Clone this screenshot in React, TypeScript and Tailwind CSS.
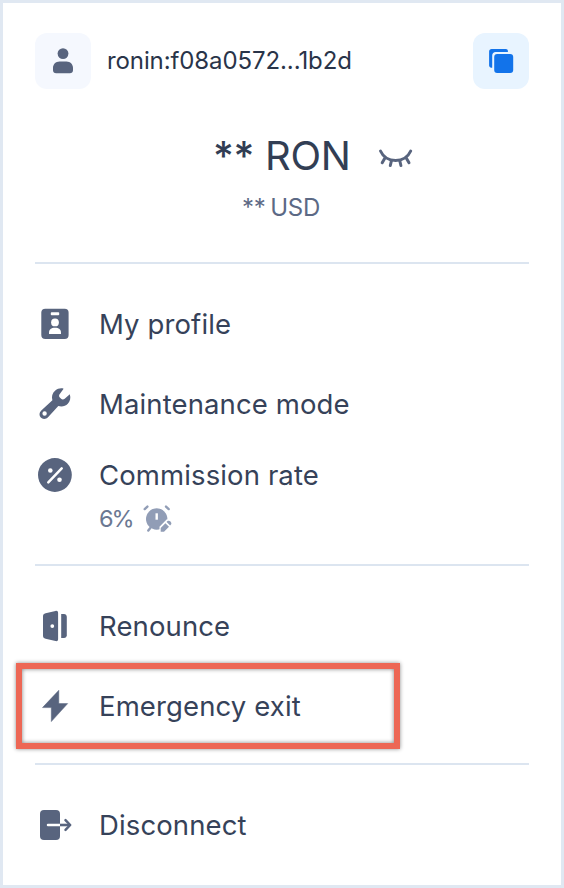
import type { ReactNode } from "react";

const INK = "#58647e";

function UserIcon() {
  return (
    <svg width="24" height="28" viewBox="0 0 24 28" fill={INK}>
      <circle cx="12" cy="6.600" r="5.400" />
      <path d="M8.500 14.400h7c3.700 0 6.500 2.800 6.500 6.400v2.400c0 1.800-1.300 3.100-3.100 3.100H5.100C3.300 26.300 2 25 2 23.200v-2.400c0-3.600 2.800-6.400 6.500-6.400z" />
    </svg>
  );
}

function CopyIcon() {
  return (
    <svg width="26" height="26" viewBox="0 0 26 26" fill="#1273ea">
      <path d="M3.600 1h14.300c1.200 0 2 .8 2 2v1H7.600C5.600 4 4.200 5.400 4.200 7.400v12.300H3.300c-1.200 0-2.200-.9-2.200-2.100V3.600C1.100 2.100 2.100 1 3.600 1z" />
      <rect x="6.200" y="6" width="19" height="19" rx="3" />
    </svg>
  );
}

function ClosedEyeIcon() {
  return (
    <svg className="mt-1.5" width="36" height="24" viewBox="0 0 36 24" fill="none" stroke={INK} strokeWidth="3" strokeLinecap="round">
      <path d="M2.500 4C5.200 10 10.800 13.400 17.600 13.400S30 10 32.700 4" />
      <path d="M6.800 11.200L4.200 15.800M13.500 13.500l-1.200 5M21.700 13.500l1.200 5M28.400 11.200l2.600 4.600" />
    </svg>
  );
}

function BadgeIcon() {
  return (
    <svg width="40" height="40" viewBox="0 0 40 40">
      <rect x="6.300" y="4.800" width="27.300" height="30.300" rx="4" fill={INK} />
      <g fill="white">
        <rect x="15.800" y="8.300" width="8.400" height="2.900" rx=".8" />
        <circle cx="20" cy="18.400" r="3.900" />
        <path d="M14 30v-1.300c0-3 2.200-4.900 6-4.900s6 1.900 6 4.900V30z" />
      </g>
    </svg>
  );
}

function WrenchIcon() {
  return (
    <svg width="40" height="40" viewBox="0 0 40 40">
      <path
        fill={INK}
        fillRule="evenodd"
        d="M28.600 4.700c-2.600-.8-6-.2-8.300 1.800-3 2.600-4 6-2.900 9.700L6.300 26.600c-2.300 2.100-2.300 5.200-.5 7 1.900 1.900 5.300 1.700 7.200-.4l10.300-11.100c3.900.9 7.100.1 9.500-2.300 2.300-2.400 3.200-6 2-9.600l-5.100 4.600c-1.200 1-2.600 1-3.600 0l-1.300-1.300c-1-1-1-2.400 0-3.500zM9.600 27.300a2.200 2.200 0 1 1 0 4.400 2.200 2.200 0 0 1 0-4.400z"
      />
    </svg>
  );
}

function PercentIcon() {
  return (
    <svg width="40" height="40" viewBox="0 0 40 40">
      <circle cx="19.900" cy="20" r="16.900" fill={INK} />
      <path d="M13.300 27.300L26.700 13.400" stroke="white" strokeWidth="2.500" strokeLinecap="round" />
      <circle cx="15.300" cy="15.500" r="2.300" fill="white" />
      <circle cx="24.500" cy="24.700" r="2.300" fill="white" />
    </svg>
  );
}

function AlarmEditIcon() {
  return (
    <svg width="30" height="30" viewBox="0 0 30 30" fill="none">
      <g stroke="#919db6" strokeWidth="2.400" strokeLinecap="round">
        <path d="M2.700 5.100l2.700-2.500M24 2.600l2.700 2.500M8.300 24l-2 2.500" />
      </g>
      <circle cx="14.700" cy="15" r="10.700" fill="#919db6" />
      <path d="M14.700 9.300v6.400" stroke="white" strokeWidth="2.400" />
      <path d="M17.500 28v-5.300l7.600-7.600 4.400 4.400-8 8.500z" fill="white" />
      <path d="M18.700 27.800v-3.900l4.700-4.700 3.600 3.600-5 5zM24.600 18l.9-.9c1.800-1.600 5 1.500 3.500 3.500l-.9.900z" fill="#919db6" />
    </svg>
  );
}

function DoorIcon() {
  return (
    <svg width="40" height="40" viewBox="0 0 40 40" fill={INK}>
      <path fillRule="evenodd" d="M10.600 7.200l9.900-2.300c1.600-.4 2.600.5 2.600 2v26.300c0 1.500-1 2.300-2.600 1.900l-9.900-2.300C8.800 32.400 8 31.300 8 29.800V10.200c0-1.500.8-2.600 2.600-3zM17.300 18.200a1.900 1.900 0 1 0 0 3.800 1.900 1.900 0 0 0 0-3.800z" />
      <path d="M26.200 8h2.800c1.600 0 2.800 1.200 2.800 2.800v18.400c0 1.600-1.200 2.800-2.800 2.800h-2.800z" />
    </svg>
  );
}

function BoltIcon() {
  return (
    <svg width="40" height="40" viewBox="0 0 40 40">
      <path d="M23.800 4.300L7.500 21.600h8.800v14L32.700 17.600h-8.900z" fill={INK} stroke={INK} strokeWidth=".5" strokeLinejoin="round" />
    </svg>
  );
}

function ExitIcon() {
  return (
    <svg width="40" height="40" viewBox="0 0 40 40" fill="none" strokeLinecap="round" strokeLinejoin="round">
      <rect x="5" y="5" width="20" height="30" rx="4" fill={INK} />
      <path d="M13 20h12" stroke="white" strokeWidth="2.500" />
      <path d="M25 18.700h9v2.600h-9z" fill={INK} />
      <path d="M30.500 15.200l4.700 4.800-4.700 4.800" stroke={INK} strokeWidth="2.500" />
    </svg>
  );
}

function MenuRow({ icon, label }: { icon: ReactNode; label: string }) {
  return (
    <div className="flex h-20 items-center gap-6">
      {icon}
      <span className="text-[27.500px] leading-9 tracking-[0.12px] whitespace-nowrap text-[#364259]">{label}</span>
    </div>
  );
}

function Divider() {
  return <div className="h-[2px] bg-[#dce5f0]" />;
}

export default function App() {
  return (
    <main className="h-[888px] w-[564px] overflow-hidden border-[3px] border-[#e0e8f2] bg-white px-8 pt-[30px] font-['Inter',sans-serif] text-[#364259]">
      <header className="flex h-14 items-center">
        <div className="flex size-14 items-center justify-center rounded-xl bg-[#f5f8fe]">
          <UserIcon />
        </div>
        <span className="ml-4 text-[24px] leading-8 tracking-[-0.1px] text-[#293449]">ronin:f08a0572...1b2d</span>
        <button className="ml-auto flex size-14 items-center justify-center rounded-xl bg-[#e8f4ff]" aria-label="Copy address">
          <CopyIcon />
        </button>
      </header>

      <section className="mt-[43px] h-[130px]">
        <div className="flex h-12 items-center pl-[178px]">
          <span className="w-[165px] text-[40px] leading-[48px] tracking-[-0.3px] whitespace-nowrap text-[#323e54]">
            <span className="font-medium">**</span> RON
          </span>
          <ClosedEyeIcon />
        </div>
        <p className="mt-3 pl-[207px] text-[24px] leading-8 tracking-[-0.2px] [word-spacing:-2px] text-[#5c6985]">** USD</p>
      </section>

      <Divider />
      <nav className="h-[300px] pt-5">
        <MenuRow icon={<BadgeIcon />} label="My profile" />
        <MenuRow icon={<WrenchIcon />} label="Maintenance mode" />
        <div className="-mt-[9px]">
          <MenuRow icon={<PercentIcon />} label="Commission rate" />
        </div>
        <div className="-mt-3 flex h-8 items-center pl-16">
          <span className="w-[43px] text-[23.500px] leading-8 tracking-[-2px] text-[#6b7892]">6%</span>
          <AlarmEditIcon />
        </div>
      </nav>

      <Divider />
      <nav className="relative h-[197px] pt-5">
        <MenuRow icon={<DoorIcon />} label="Renounce" />
        <MenuRow icon={<BoltIcon />} label="Emergency exit" />
        <div className="pointer-events-none absolute top-[97px] -left-[19px] h-[86px] w-[384px] border-[6px] border-[#ed6755] shadow-[0_0_4px_rgba(0,0,0,0.45),inset_0_0_4px_rgba(0,0,0,0.5)]" />
      </nav>

      <Divider />
      <div className="pt-5">
        <MenuRow icon={<ExitIcon />} label="Disconnect" />
      </div>
    </main>
  );
}
